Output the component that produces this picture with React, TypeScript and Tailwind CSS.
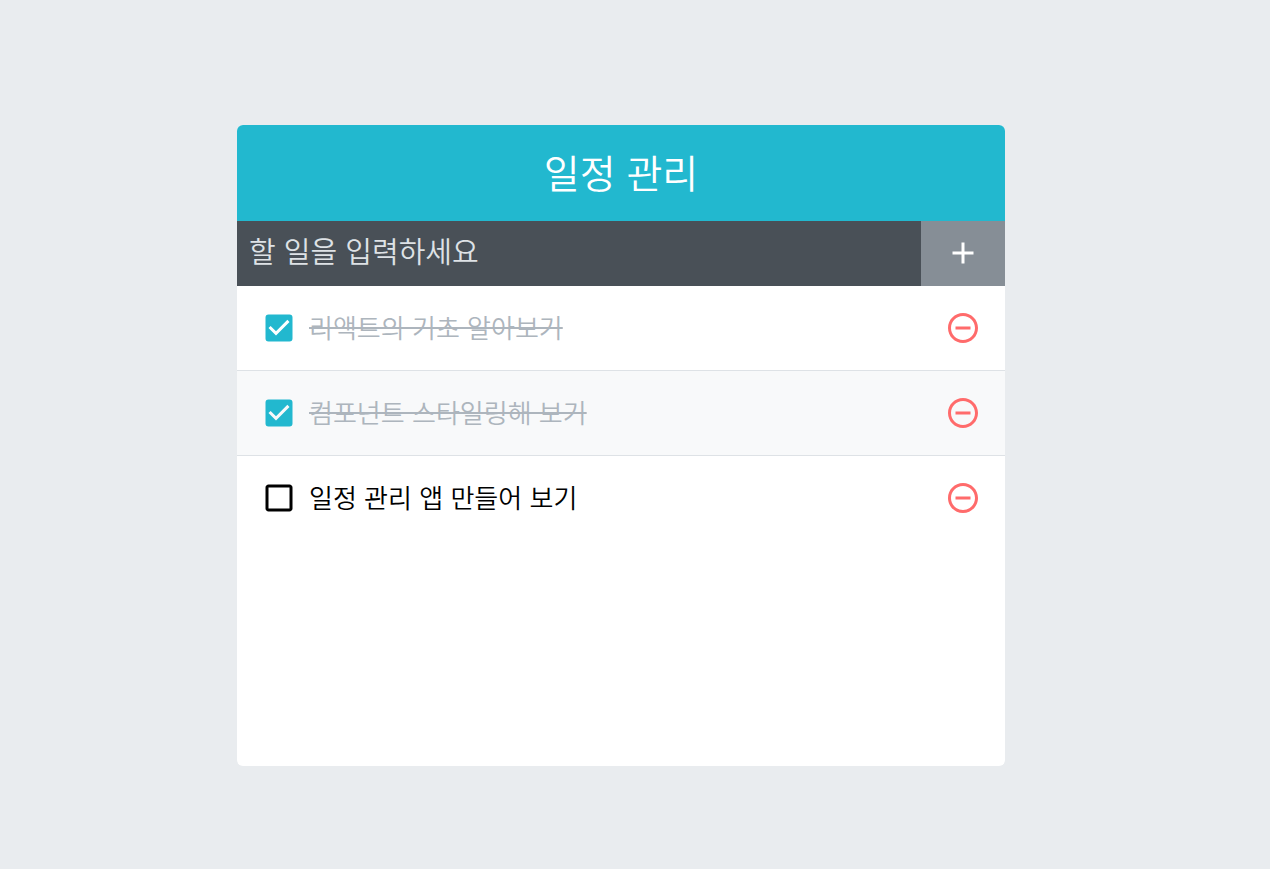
import { useState } from 'react'
import type { FormEvent, ReactNode } from 'react'
import {
  MdAdd,
  MdCheckBox,
  MdCheckBoxOutlineBlank,
  MdRemoveCircleOutline,
} from 'react-icons/md'

type Todo = {
  id: number
  text: string
  checked: boolean
}

const initialTodos: Todo[] = [
  { id: 1, text: '리액트의 기초 알아보기', checked: true },
  { id: 2, text: '컴포넌트 스타일링해 보기', checked: true },
  { id: 3, text: '일정 관리 앱 만들어 보기', checked: false },
]

function TodoTemplate({ children }: { children: ReactNode }) {
  return (
    <main className="w-full max-w-3xl mx-auto rounded-md overflow-hidden bg-white">
      <h1 className="h-24 pb-1 flex items-center justify-center bg-[#22b8cf] text-white text-[39px] font-[350]">
        일정 관리
      </h1>
      {children}
    </main>
  )
}

function TodoInsert({ onInsert }: { onInsert: (text: string) => void }) {
  const [value, setValue] = useState('')

  const onSubmit = (e: FormEvent) => {
    e.preventDefault()
    if (!value.trim()) return
    onInsert(value)
    setValue('')
  }

  return (
    <form className="flex bg-[#495057]" onSubmit={onSubmit}>
      <input
        type="text"
        aria-label="할 일"
        placeholder="할 일을 입력하세요"
        value={value}
        onChange={(e) => setValue(e.target.value)}
        className="flex-1 min-w-0 h-[65px] px-3 pb-2 text-[29px] font-[350] text-white placeholder:text-[#dee2e6] outline-none"
      />
      <button
        type="submit"
        aria-label="추가"
        className="px-6 pt-3.5 flex items-start bg-[#868e96] text-white hover:bg-[#adb5bd] transition-colors cursor-pointer"
      >
        <MdAdd size={36} />
      </button>
    </form>
  )
}

type ItemProps = {
  todo: Todo
  onToggle: (id: number) => void
  onRemove: (id: number) => void
}

function TodoListItem({ todo, onToggle, onRemove }: ItemProps) {
  const { id, text, checked } = todo
  const Icon = checked ? MdCheckBox : MdCheckBoxOutlineBlank

  return (
    <li className="flex items-center p-6 even:bg-[#f8f9fa] border-t border-[#dee2e6] first:border-t-0">
      <label className="flex-1 flex items-center gap-3 cursor-pointer">
        <span className="grid shrink-0">
          <input
            type="checkbox"
            checked={checked}
            onChange={() => onToggle(id)}
            className="appearance-none col-start-1 row-start-1 size-9"
          />
          <Icon
            size={36}
            className={
              checked
                ? 'col-start-1 row-start-1 pointer-events-none text-[#22b8cf]'
                : 'col-start-1 row-start-1 pointer-events-none text-black'
            }
          />
        </span>
        <span
          className={
            checked
              ? 'pb-0.5 text-[26px] leading-8 font-[350] text-[#adb5bd] line-through decoration-2'
              : 'pb-0.5 text-[26px] leading-8 font-[350] text-black'
          }
        >
          {text}
        </span>
      </label>
      <button
        type="button"
        aria-label="삭제"
        onClick={() => onRemove(id)}
        className="text-[#ff6b6b] hover:text-[#ff8787] cursor-pointer"
      >
        <MdRemoveCircleOutline size={36} />
      </button>
    </li>
  )
}

export default function App() {
  const [todos, setTodos] = useState(initialTodos)

  const onInsert = (text: string) =>
    setTodos((prev) => [...prev, { id: Date.now(), text, checked: false }])

  const onToggle = (id: number) =>
    setTodos((prev) => prev.map((t) => (t.id === id ? { ...t, checked: !t.checked } : t)))

  const onRemove = (id: number) => setTodos((prev) => prev.filter((t) => t.id !== id))

  return (
    <div
      lang="ko"
      className="min-h-screen pt-[125px] pb-24 pr-7 bg-[#e9ecef] font-['Noto_Sans_CJK_KR',sans-serif]"
    >
      <TodoTemplate>
        <TodoInsert onInsert={onInsert} />
        <ul className="min-h-[480px]">
          {todos.map((todo) => (
            <TodoListItem key={todo.id} todo={todo} onToggle={onToggle} onRemove={onRemove} />
          ))}
        </ul>
      </TodoTemplate>
    </div>
  )
}
